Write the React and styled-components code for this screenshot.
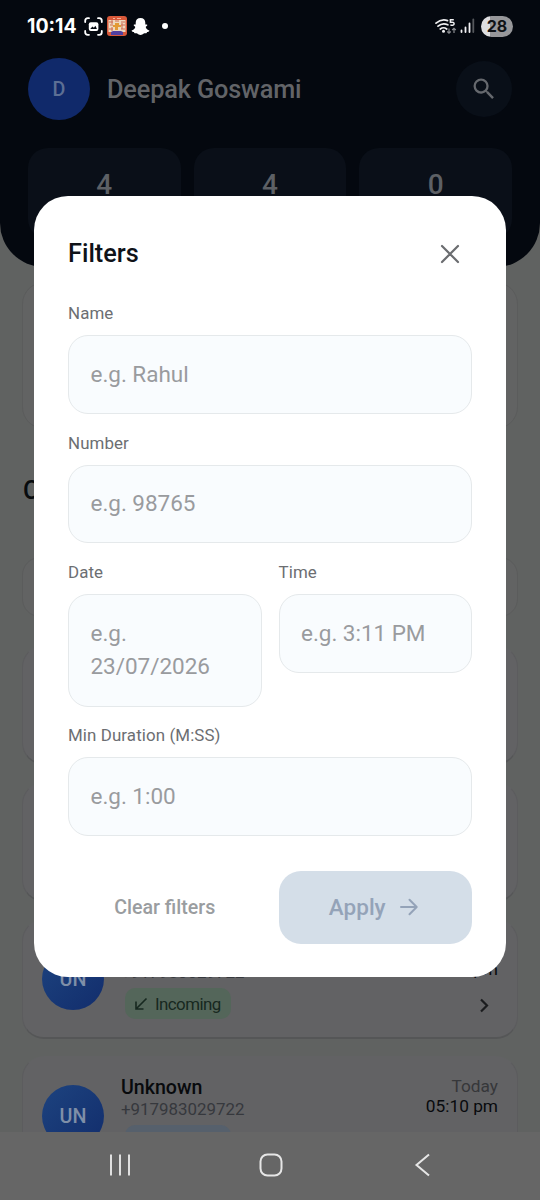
import styled, { createGlobalStyle } from "styled-components";

const GlobalStyle = createGlobalStyle`
  * {
    box-sizing: border-box;
  }
  body {
    margin: 0;
    font-family: Roboto, "Noto Sans", sans-serif;
  }
`;

const Screen = styled.div`
  position: relative;
  display: flex;
  flex-direction: column;
  width: 540px;
  height: 1200px;
  overflow: hidden;
  background: #606261;
`;

// Header
const Header = styled.header`
  flex: none;
  height: 267px;
  border-radius: 0 0 44px 44px;
  background: #04080f;
`;

const StatusBar = styled.div`
  display: flex;
  align-items: center;
  justify-content: space-between;
  height: 52px;
  padding: 0 27px;
`;

const StatusGroup = styled.div`
  display: flex;
  align-items: center;
  gap: ${(props) => props.$gap};
`;

const Clock = styled.span`
  width: 51px;
  margin-right: 2px;
  color: #fff;
  font-family: Inter, sans-serif;
  font-size: 19.5px;
  font-weight: 700;
  white-space: nowrap;
`;

const Dot = styled.i`
  width: 6px;
  height: 6px;
  margin-left: 8px;
  border-radius: 50%;
  background: #fff;
`;

const Battery = styled.span`
  width: 32px;
  height: 21px;
  margin-left: 3px;
  border-radius: 11px;
  background: linear-gradient(90deg, #dedee0 28%, #97979a 28%);
  color: #101216;
  font-family: Inter, sans-serif;
  font-size: 16px;
  font-weight: 700;
  line-height: 21px;
  text-align: center;
`;

const ProfileRow = styled.div`
  display: flex;
  align-items: center;
  height: 62px;
  margin-top: 6px;
  padding: 0 28px;
`;

const Avatar = styled.div`
  display: flex;
  flex: none;
  align-items: center;
  justify-content: center;
  width: 62px;
  height: 62px;
  border-radius: 50%;
  background: ${(props) => props.$bg};
  color: ${(props) => props.$color};
  font-size: ${(props) => props.$size};
  font-weight: 500;
`;

const UserName = styled.h1`
  flex: 1;
  margin: 0 0 0 17px;
  color: #626468;
  font-size: 25.3px;
  font-weight: 500;
  letter-spacing: -0.15px;
`;

const SearchButton = styled.div`
  display: flex;
  align-items: center;
  justify-content: center;
  width: 56px;
  height: 56px;
  border-radius: 50%;
  background: #090f18;
`;

const Stats = styled.div`
  display: grid;
  grid-template-columns: repeat(3, 1fr);
  gap: 13px;
  margin-top: 28px;
  padding: 0 28px;
`;

const Stat = styled.div`
  height: 91px;
  padding-top: 20px;
  border-radius: 20px;
  background: #0a0f18;
  color: #5d6065;
  font-size: 28px;
  font-weight: 500;
  line-height: 34px;
  text-align: center;
`;

// Page under the dialog
const Content = styled.main`
  flex: 1;
  min-height: 0;
  overflow: hidden;
  padding: 0 22px;
`;

const Panel = styled.div`
  height: ${(props) => props.$height};
  margin-top: ${(props) => props.$top};
  border: 1px solid #5b5c5c;
  border-radius: ${(props) => props.$radius || "22px"};
  background: #626363;
`;

const SectionTitle = styled.h2`
  margin: 45px 0 0 1px;
  color: #080b0e;
  font-size: 25px;
  font-weight: 500;
  line-height: 34px;
`;

const CallCard = styled.article`
  display: flex;
  height: 120px;
  margin-top: ${(props) => props.$top || "17px"};
  padding: 18px 19px 0;
  border: 1px solid #5c5c5e;
  border-top-color: transparent;
  border-bottom: 2px solid #555657;
  border-radius: 22px;
  background: #626264;
`;

const CallAvatar = styled(Avatar)`
  margin-top: 10px;
`;

const CallInfo = styled.div`
  flex: 1;
  margin-left: 17px;
`;

const CallName = styled.div`
  color: #080a0d;
  font-size: 19.6px;
  font-weight: 500;
  line-height: 25px;
`;

const CallNumber = styled.div`
  color: #36383d;
  font-size: 16.9px;
  line-height: 18px;
`;

const CallType = styled.div`
  display: flex;
  align-items: center;
  gap: 6px;
  width: 106px;
  height: 31px;
  margin: 7px 0 0 4px;
  padding-left: 8px;
  border-radius: 10px;
  background: ${(props) => props.$bg};
  color: #172820;
  font-size: 16.9px;
  letter-spacing: -0.55px;
`;

const CallTime = styled.div`
  display: flex;
  flex-direction: column;
  align-items: flex-end;
  padding-top: 2px;
  color: #080a0d;
  font-size: 17.3px;
  line-height: 19.5px;

  svg {
    margin: 16px 3px 0 0;
  }
`;

const Day = styled.span`
  color: #36373a;
`;

const NavBar = styled.nav`
  display: flex;
  flex: none;
  align-items: center;
  justify-content: space-between;
  height: 68px;
  padding: 0 107px 2px 108px;
  background: #666;
`;

// Filter dialog
const Dialog = styled.section`
  position: absolute;
  top: 196px;
  left: 34px;
  width: 472px;
  height: 781px;
  padding: 34px;
  border-radius: 34px;
  background: #fff;
`;

const DialogHeader = styled.div`
  display: flex;
  align-items: center;
  justify-content: space-between;
  height: 47px;
  padding-right: 12px;
`;

const DialogTitle = styled.h2`
  margin: 0;
  color: #0f1218;
  font-size: 25.3px;
  font-weight: 500;
`;

const Fields = styled.div`
  display: flex;
  flex-direction: column;
  gap: 17.75px;
  margin-top: 25px;
`;

const FieldRow = styled.div`
  display: grid;
  grid-template-columns: 1fr 1fr;
  align-items: start;
  gap: 17px;
`;

const FieldLabel = styled.div`
  margin-bottom: 10px;
  color: #6c6e72;
  font-size: 16.9px;
  line-height: 23px;
  letter-spacing: 0.1px;
`;

const FieldBox = styled.div`
  padding: 21.5px;
  border: 1px solid #e5e9eb;
  border-radius: 20px;
  background: #f9fcfe;
  color: #999b9e;
  font-size: 22.5px;
  line-height: 33.75px;
  letter-spacing: -0.03px;
`;

const Actions = styled.div`
  display: grid;
  grid-template-columns: 1fr 1fr;
  gap: 17px;
  margin-top: 34.5px;
`;

const ActionButton = styled.button`
  display: flex;
  align-items: center;
  justify-content: center;
  gap: 13px;
  height: 73px;
  padding: ${(props) => (props.$filled ? "0 3px 0 0" : "0")};
  border: none;
  border-radius: 22px;
  background: ${(props) => (props.$filled ? "#d4dee8" : "transparent")};
  color: ${(props) => (props.$filled ? "#94a3b8" : "#9a9da0")};
  font-family: inherit;
  font-size: ${(props) => (props.$filled ? "22.5px" : "19.6px")};
  font-weight: 500;
`;

const ScreenshotIcon = () => (
  <svg width="19" height="19" viewBox="0 0 19 19" fill="none">
    <path
      d="M1.2 5V3.8Q1.2 1.2 3.8 1.2H5M14 1.2h1.2q2.6 0 2.6 2.6V5M17.8 14v1.2q0 2.6-2.6 2.6H14M5 17.8H3.8q-2.6 0-2.6-2.6V14"
      stroke="#fff"
      strokeWidth="1.8"
      strokeLinecap="round"
    />
    <rect x="4.8" y="5.3" width="9.6" height="8.6" rx="2" fill="#fff" />
    <path d="M6.2 12l2.2-2.6 1.5 1.3 1.5-2 1.5 3.3z" fill="#04080f" />
  </svg>
);

const GameIcon = () => (
  <svg width="20" height="20" viewBox="0 0 20 20">
    <rect width="20" height="20" rx="3" fill="#d9593a" />
    <rect x="1.5" y="4" width="17" height="12" fill="#eed9bf" />
    <path
      d="M2 6h4M8 5h4M14 6h4M3 9h3M14 9h4M2 13h4M14 13h4M5 4v4M15 7v6M5 11v4"
      stroke="#cc6c55"
      strokeWidth="1"
    />
    <path d="M8 7h4v2h2v2h-3v3H8v-3H6V9h2z" fill="#e29a36" />
    <path d="M4 16l2-1h8l2 1v3H4z" fill="#5140a0" />
    <path d="M6 2.5h2M10 2.5h4" stroke="#f4b49b" strokeWidth="1.2" />
  </svg>
);

const SnapIcon = () => (
  <svg width="19" height="19" viewBox="0 0 19 19" fill="#fff">
    <path d="M9.5 1c3 0 4.800 2 4.800 4.700v1.800c.8.3 1.700-.3 2 .5.3.9-1.300 1.200-1.600 2 .4 1.800 2 3 3.600 3.500.5.9-1.100 1.400-2.200 1.600-.3.5-.2 1-.8 1.100-.8.1-1.600-.2-2.500.3-1 .6-1.900 1.500-3.300 1.500s-2.300-.9-3.300-1.500c-.9-.5-1.700-.2-2.500-.3-.6-.1-.5-.6-.8-1.100C1.800 14.900.2 14.400.7 13.500 2.300 13 3.900 11.800 4.300 10c-.3-.8-1.900-1.100-1.600-2 .3-.8 1.200-.2 2-.5V5.700C4.700 3 6.500 1 9.500 1z" />
  </svg>
);

const WifiIcon = () => (
  <svg width="22" height="17" viewBox="0 0 22 17" fill="none">
    <path
      d="M1 5.2Q6.5.4 12.500 2.600M3 8.200q4.500-3.800 9.800-1.400M5.300 11q3.200-2.500 6.400 0"
      stroke="#f0f0f2"
      strokeWidth="1.7"
      strokeLinecap="round"
    />
    <circle cx="8.5" cy="13.3" r="1.5" fill="#f0f0f2" />
    <path
      d="M18.8 1.8h-3.400v2.500q3.700-.7 3.700 1.500 0 2-3.700 1.300"
      stroke="#f0f0f2"
      strokeWidth="1.5"
    />
    <path
      d="M14 10.5v4.700m-1.800-1.700 1.800 1.700 1.800-1.700M19 15v-4.700m-1.800 1.700 1.800-1.700 1.800 1.700"
      stroke="#8a8c90"
      strokeWidth="1.2"
    />
  </svg>
);

const SignalIcon = () => (
  <svg width="15" height="16" viewBox="0 0 15 16" strokeWidth="1.8" strokeLinecap="round">
    <path d="M1.5 12.5V14M5.5 9.5V14M9.5 5.5V14" stroke="#f0f0f2" />
    <path d="M13.3 1.5V14" stroke="#55585c" />
  </svg>
);

const SearchIcon = () => (
  <svg width="28" height="28" viewBox="0 0 24 24" fill="#66696e">
    <path d="M15.5 14h-.79l-.28-.27A6.471 6.471 0 0 0 16 9.5 6.5 6.5 0 1 0 9.5 16c1.61 0 3.09-.59 4.23-1.57l.27.28v.79l5 4.99L20.49 19l-4.99-5zm-6 0C7.01 14 5 11.99 5 9.5S7.01 5 9.5 5 14 7.01 14 9.5 11.99 14 9.5 14z" />
  </svg>
);

const CloseIcon = () => (
  <svg width="20" height="20" viewBox="0 0 20 20">
    <path
      d="M2 2l16 16M18 2L2 18"
      stroke="#6b6d70"
      strokeWidth="2.2"
      strokeLinecap="round"
    />
  </svg>
);

const ArrowIcon = () => (
  <svg width="20" height="20" viewBox="0 0 20 20" fill="none">
    <path
      d="M2 10h15.5M10.5 2.8 17.7 10l-7.2 7.2"
      stroke="#94a3b8"
      strokeWidth="2"
      strokeLinecap="round"
      strokeLinejoin="round"
    />
  </svg>
);

const IncomingIcon = () => (
  <svg width="16" height="16" viewBox="0 0 16 16" fill="none">
    <path d="M13.5 2.5 3.5 12.5M3 5.5v7.5h7.5" stroke="#172820" strokeWidth="1.6" />
  </svg>
);

const ChevronIcon = () => (
  <svg width="20" height="20" viewBox="0 0 20 20" fill="none">
    <path d="M6 4.5 12 10.5l-6 6" stroke="#1b1c1e" strokeWidth="2.2" />
  </svg>
);

const RecentsIcon = () => (
  <svg width="24" height="24" viewBox="0 0 24 24">
    <path d="M3 1.5v21M12 1.5v21M21 1.5v21" stroke="#e6e6e6" strokeWidth="1.9" />
  </svg>
);

const HomeIcon = () => (
  <svg width="24" height="24" viewBox="0 0 24 24" fill="none">
    <rect x="1.5" y="1.5" width="21" height="21" rx="7" stroke="#e6e6e6" strokeWidth="2" />
  </svg>
);

const BackIcon = () => (
  <svg width="24" height="24" viewBox="0 0 24 24" fill="none">
    <path d="M20 1.5 7.5 12 20 22.5" stroke="#e6e6e6" strokeWidth="2" />
  </svg>
);

const Field = ({ label, placeholder }) => (
  <div>
    <FieldLabel>{label}</FieldLabel>
    <FieldBox>{placeholder}</FieldBox>
  </div>
);

const Call = ({ time, typeBg, incoming }) => (
  <CallCard>
    <CallAvatar
      $bg="linear-gradient(135deg, #1d437f, #122d6c)"
      $color="#7f8fa8"
      $size="19.7px"
    >
      UN
    </CallAvatar>
    <CallInfo>
      <CallName>Unknown</CallName>
      <CallNumber>+917983029722</CallNumber>
      <CallType $bg={typeBg}>
        {incoming && (
          <>
            <IncomingIcon />
            Incoming
          </>
        )}
      </CallType>
    </CallInfo>
    <CallTime>
      <Day>Today</Day>
      <span>{time}</span>
      <ChevronIcon />
    </CallTime>
  </CallCard>
);

const FilterDialog = () => (
  <Dialog>
    <DialogHeader>
      <DialogTitle>Filters</DialogTitle>
      <CloseIcon />
    </DialogHeader>
    <Fields>
      <Field label="Name" placeholder="e.g. Rahul" />
      <Field label="Number" placeholder="e.g. 98765" />
      <FieldRow>
        <Field label="Date" placeholder="e.g. 23/07/2026" />
        <Field label="Time" placeholder="e.g. 3:11 PM" />
      </FieldRow>
      <Field label="Min Duration (M:SS)" placeholder="e.g. 1:00" />
    </Fields>
    <Actions>
      <ActionButton>Clear filters</ActionButton>
      <ActionButton $filled>
        Apply
        <ArrowIcon />
      </ActionButton>
    </Actions>
  </Dialog>
);

export default function App() {
  return (
    <Screen>
      <GlobalStyle />
      <Header>
        <StatusBar>
          <StatusGroup $gap="4px">
            <Clock>10:14</Clock>
            <ScreenshotIcon />
            <GameIcon />
            <SnapIcon />
            <Dot />
          </StatusGroup>
          <StatusGroup $gap="3px">
            <WifiIcon />
            <SignalIcon />
            <Battery>28</Battery>
          </StatusGroup>
        </StatusBar>
        <ProfileRow>
          <Avatar $bg="#10296a" $color="#5d6f94" $size="19.7px">
            D
          </Avatar>
          <UserName>Deepak Goswami</UserName>
          <SearchButton>
            <SearchIcon />
          </SearchButton>
        </ProfileRow>
        <Stats>
          <Stat>4</Stat>
          <Stat>4</Stat>
          <Stat>0</Stat>
        </Stats>
      </Header>
      <Content>
        <Panel $top="15px" $height="147px" />
        <SectionTitle>Calls</SectionTitle>
        <Panel $top="49px" $height="60px" $radius="18px" />
        <CallCard $top="28px" />
        <CallCard />
        <Call time="05:12 pm" typeBg="#54665a" incoming />
        <Call time="05:10 pm" typeBg="#56606c" />
      </Content>
      <NavBar>
        <RecentsIcon />
        <HomeIcon />
        <BackIcon />
      </NavBar>
      <FilterDialog />
    </Screen>
  );
}
